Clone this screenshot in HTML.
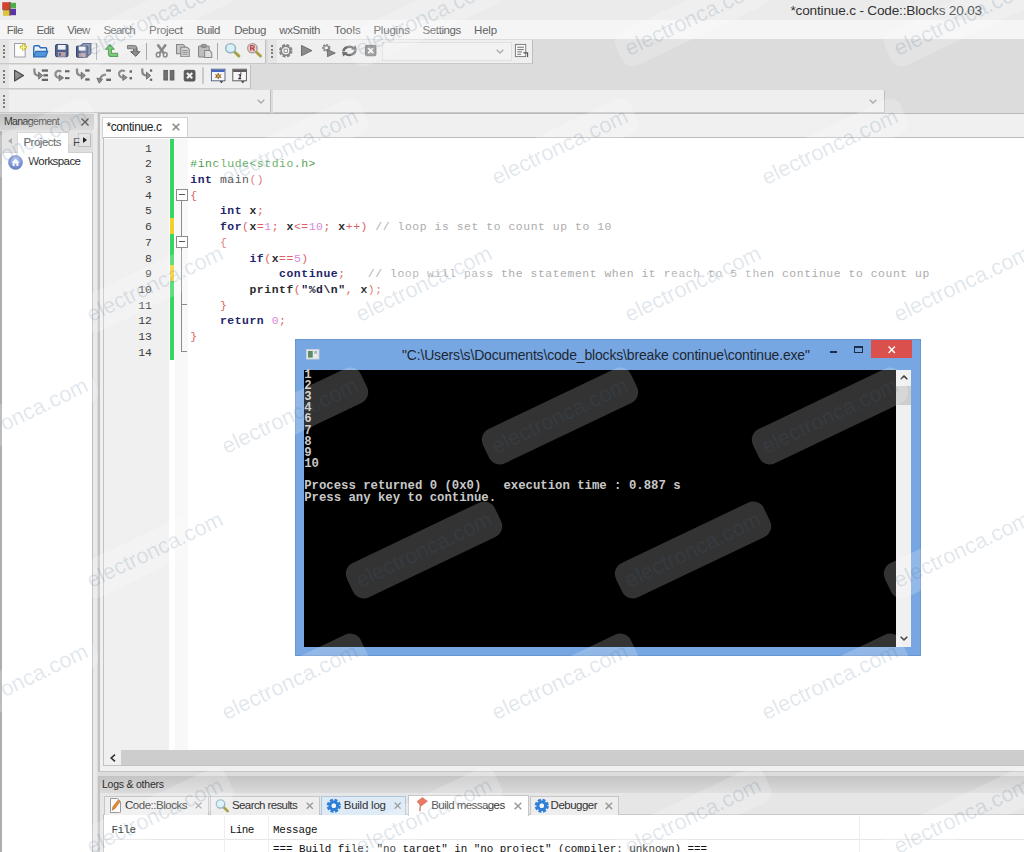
<!DOCTYPE html>
<html><head><meta charset="utf-8"><title>continue.c - Code::Blocks 20.03</title>
<style>
*{box-sizing:border-box;margin:0;padding:0}
html,body{width:1024px;height:852px;overflow:hidden;background:#dcdcdc;font-family:"Liberation Sans",sans-serif;font-size:12px;color:#222}
body{position:relative}
.abs{position:absolute}
svg{display:block;overflow:visible}
.ts,.tm{position:absolute;white-space:pre}
.ts{font-family:"Liberation Sans",sans-serif}
.tm{font-family:"Liberation Mono",monospace}
#title{left:0;top:0;width:1024px;height:20px;background:#ebebeb}
#menu{left:0;top:20px;width:1024px;height:19px;background:#f5f5f5}
.bar{position:absolute;background:#efefef;border-bottom:1px solid #c8c8c8;border-right:1px solid #bebebe}
.grip{position:absolute;left:0;top:0;width:8.5px;height:100%;background:#e5e5e5}
.grip:after{content:"";position:absolute;left:3.2px;top:4.8px;width:2.3px;height:13.2px;background:repeating-linear-gradient(to bottom,#7c7c7c 0,#7c7c7c 2px,transparent 2px,transparent 3.7px)}
.sep{position:absolute;width:1px;height:17px;background:#a8a8a8}
.ic{position:absolute}
.combo{position:absolute;background:#f2f2f2;border:1px solid #e0e0e0}
.chev{position:absolute;width:8px;height:5px}
/* management */
#mgmt{left:0;top:113px;width:97px;height:739px;background:linear-gradient(to right,#dedede 93px,#e9e9e9 93px)}
#mgmt .hd{position:absolute;left:0;top:.5px;width:93.5px;height:16.5px;background:linear-gradient(#c2c2c2,#d4d4d4)}
#mgmt .tree{position:absolute;left:0;top:39px;width:92.5px;height:700px;background:#fff;border-left:2.3px solid #adadad;border-right:1.5px solid #bdbdbd;border-top:1px solid #d0d0d0}
#mgmt .ls{position:absolute;left:0;top:18px;width:2.3px;height:22px;background:#b4b4b4}
#mgmt .tab{position:absolute;left:16.5px;top:18.5px;width:52.5px;height:21.5px;background:#fff;border:1px solid #cfcfcf;border-bottom:none}
/* editor */
#edwrap{left:97.5px;top:113px;width:927px;height:658.5px;background:#f0f0f0;border-left:2px solid #c2c2c2;border-top:1.5px solid #b8b8b8;border-bottom:1.5px solid #c4c4c4}
#edtab{left:102px;top:116.5px;width:85.5px;height:22px;background:#fff;border:1px solid #d2d2d2;border-bottom:none}
#ed{left:103px;top:137.3px;width:921px;height:628.5px;background:#fff;border-top:1.5px solid #bcbcbc;border-left:1px solid #c2c2c2;border-bottom:1px solid #c2c2c2}
#lnm{left:104px;top:138.8px;width:64.5px;height:611.2px;background:#f0f0f0}
#chg{left:169.8px;top:138.8px;width:4.1px;height:220.8px;background:#36d660}
#fold{left:174.5px;top:138.8px;width:13.5px;height:611.2px;background:#f8f8f8}
.chy{position:absolute;left:169.8px;width:4.1px;background:#f4cf2a}
#hsb{left:104px;top:750px;width:920px;height:15px;background:#f0f0f0}
#hsb i{position:absolute;left:16.8px;top:0;right:0;height:15px;background:#cdcdcd}
pre{font-family:"Liberation Mono",monospace}
#code{left:190.3px;top:141.7px;font-size:11.4px;letter-spacing:.56px;line-height:15.68px;color:#2a2a2a}
#lns{left:104px;top:141.7px;width:47.8px;text-align:right;font-size:11.4px;line-height:15.68px;color:#3c3c3c}
.k{color:#24246a;font-weight:bold}.p{color:#4a9e4a}.o{color:#dc6060}.n{color:#d888d8}.c{color:#acacac}.s{color:#22223a;font-weight:bold}.b{font-weight:bold;color:#2a2a2a}
.fb{position:absolute;left:175.6px;width:12px;height:12px;border:1px solid #8c8c8c;background:#fff}
.fb:after{content:"";position:absolute;left:2px;top:4.5px;width:6px;height:1px;background:#555}
.fl{position:absolute;background:#8c8c8c}
/* console */
#con{left:295px;top:339px;width:626px;height:317px;background:#77a7e3;border:1px solid #6a96cf}
#conblk{left:304px;top:369.6px;width:591.5px;height:277px;background:#000}
#consb{left:895.5px;top:369.6px;width:15.7px;height:277px;background:#f0f0f0}
#consb i{position:absolute;left:0;top:16px;width:15.7px;height:19px;background:#cdcdcd}
#conx{left:871px;top:340px;width:41px;height:18.4px;background:#d9504c}
#contxt{left:304.2px;top:369.8px;font-size:12.3px;line-height:11.15px;color:#c8c8c8;font-weight:bold}
/* logs */
#logs{left:97.5px;top:775.5px;width:927px;height:77px;background:#e6e6e6;border-left:2px solid #c2c2c2}
#logs .hd{position:absolute;left:0;top:.5px;right:0;height:16.5px;background:linear-gradient(#c4c4c4,#dadada)}
#loglist{left:103.2px;top:814.2px;width:921px;height:38px;background:#fff;border-left:1px solid #c2c2c2;border-top:1px solid #c8c8c8}
.ltab{position:absolute;top:796px;height:18.7px;border:1px solid #c6c6c6;border-bottom:none;background:#eeeeee}
.ltab.hov{background:#deeaf6;border-color:#b0c6dc}
.ltab.act{top:794.5px;height:21px;background:#fff}
/* watermarks */
#wms{left:0;top:0;width:1024px;height:852px;overflow:hidden;pointer-events:none}
.wm{position:absolute;width:164px;height:38px;border-radius:12px;background:rgba(255,255,255,.2);transform:rotate(-25.5deg);text-align:center;line-height:37px;font-size:21.8px;color:rgba(66,105,138,.17);white-space:nowrap}

</style></head><body>
<div id="title" class="abs"><svg class="abs" style="left:2px;top:2.3px" width="14.2" height="13.9" viewBox="0 0 14.2 13.9"><rect x=".2" y=".2" width="7.4" height="7.6" fill="#d4442c"/><rect x="8.8" y=".8" width="5.2" height="5.4" fill="#4cae44"/><rect x="1" y="8.2" width="6.4" height="5.6" fill="#dcc43c"/><rect x="8.4" y="6.8" width="5.6" height="6.4" fill="#5a34a4"/><rect x="7.2" y="0" width="1.6" height="13.6" fill="#4a2a1a" opacity=".75"/><rect x=".6" y="7.4" width="7" height="1" fill="#5a3a1a" opacity=".7"/></svg><span class="ts" style="left:790.5px;top:2.2px;font-size:13.6px;line-height:18px;letter-spacing:-0.18px;color:#333;">*continue.c - Code::Blocks 20.03</span></div>
<div id="menu" class="abs"></div><span class="ts" style="left:6.8px;top:22.5px;font-size:11.5px;line-height:15px;letter-spacing:-0.68px;color:#646464;">File</span><span class="ts" style="left:36.5px;top:22.5px;font-size:11.5px;line-height:15px;letter-spacing:-0.61px;color:#646464;">Edit</span><span class="ts" style="left:67.3px;top:22.5px;font-size:11.5px;line-height:15px;letter-spacing:-0.57px;color:#646464;">View</span><span class="ts" style="left:103.5px;top:22.5px;font-size:11.5px;line-height:15px;letter-spacing:-0.84px;color:#646464;">Search</span><span class="ts" style="left:149.1px;top:22.5px;font-size:11.5px;line-height:15px;letter-spacing:-0.34px;color:#646464;">Project</span><span class="ts" style="left:196.6px;top:22.5px;font-size:11.5px;line-height:15px;letter-spacing:-0.46px;color:#646464;">Build</span><span class="ts" style="left:234.2px;top:22.5px;font-size:11.5px;line-height:15px;letter-spacing:-0.40px;color:#646464;">Debug</span><span class="ts" style="left:279.2px;top:22.5px;font-size:11.5px;line-height:15px;letter-spacing:-0.36px;color:#646464;">wxSmith</span><span class="ts" style="left:334.0px;top:22.5px;font-size:11.5px;line-height:15px;letter-spacing:-0.04px;color:#646464;">Tools</span><span class="ts" style="left:373.4px;top:22.5px;font-size:11.5px;line-height:15px;letter-spacing:-0.20px;color:#646464;">Plugins</span><span class="ts" style="left:422.6px;top:22.5px;font-size:11.5px;line-height:15px;letter-spacing:-0.41px;color:#646464;">Settings</span><span class="ts" style="left:474.1px;top:22.5px;font-size:11.5px;line-height:15px;letter-spacing:-0.22px;color:#646464;">Help</span>
<div id="tb" class="abs" style="left:0;top:0;width:1024px;height:113px">
<div class="bar" style="left:0;top:40px;width:266px;height:24px"><div class="grip"></div></div>
<div class="bar" style="left:268px;top:40px;width:265px;height:24px"><div class="grip"></div></div>
<div class="bar" style="left:0;top:65px;width:251px;height:24px"><div class="grip"></div></div>
<div class="bar" style="left:0;top:90px;width:271px;height:23px"><div class="grip"></div></div>
<div class="bar" style="left:273px;top:90px;width:612px;height:23px"></div>
<svg class="ic" style="left:14.4px;top:43.4px;width:13.0px;height:14.5px" viewBox="2 0.7 12.2 14.3" preserveAspectRatio="none"><path d="M2.5 1.2h10v13.3h-10z" fill="#fdfdfd" stroke="#a0a0ae" stroke-width="1"/><path d="M7.4 4.8h6.8M10.8 1.4v6.8" stroke="#cfc02a" stroke-width="2.6"/><path d="M8.2 4.8h5.2M10.8 2.2v5.2" stroke="#fdf8a8" stroke-width="1"/></svg>
<svg class="ic" style="left:32.8px;top:44.8px;width:15.2px;height:12.5px" viewBox="0.8 2.3 14.7 12.100000000000001" preserveAspectRatio="none"><path d="M1.5 13.5v-9q0-1.5 1.5-1.5h3.5l1.5 2h5q1 0 1 1v2" fill="#e9f2fb" stroke="#2f6fb5" stroke-width="1.4" stroke-linejoin="round"/><path d="M1.3 13.8l2.2-5.3h11.6l-2 5.3z" fill="#4f94dc" stroke="#2f6fb5" stroke-width="1.2" stroke-linejoin="round"/></svg>
<svg class="ic" style="left:55.0px;top:44.1px;width:13.5px;height:13.2px" viewBox="1 1 14 14" preserveAspectRatio="none"><rect x="1.5" y="1.5" width="13" height="13" rx="1.5" fill="#50628c" stroke="#36456a" stroke-width="1"/><rect x="4" y="2" width="8" height="5" fill="#eef1f6"/><rect x="4" y="9.5" width="8" height="5" fill="#b9a0a8"/><rect x="5" y="10.5" width="2" height="3" fill="#50628c"/></svg>
<svg class="ic" style="left:75.6px;top:43.2px;width:15.4px;height:14.7px" viewBox="0.5 0.5 15.0 14.5" preserveAspectRatio="none"><path d="M4.5 3.5l3-2.5h7.5v10l-3 2.5" fill="#7889ab" stroke="#3c4b70" stroke-width="1"/><rect x="1" y="3.5" width="11" height="11" rx="1.2" fill="#50628c" stroke="#36456a" stroke-width="1"/><rect x="3.2" y="4" width="6.6" height="4" fill="#eef1f6"/><rect x="3.2" y="10.5" width="6.6" height="4" fill="#b9a0a8"/></svg>
<svg class="ic" style="left:105.2px;top:43.5px;width:13.2px;height:13.1px" viewBox="1.1 0.7 13.1 13.3" preserveAspectRatio="none"><path d="M6 1.2L1.6 6h2.9v4.5q0 3 3 3h6.2v-3.4H8.2q-.7 0-.7-.7V6h2.9z" fill="#5cbc5c" stroke="#2f8a36" stroke-width="1" stroke-linejoin="round"/></svg>
<svg class="ic" style="left:126.5px;top:45.4px;width:13.3px;height:11.8px" viewBox="1.8 3 13.899999999999999 12.3" preserveAspectRatio="none"><path d="M11 14.8L15.2 10h-2.9V6.5q0-3-3-3H2.3v3.4h5.5q.7 0 .7.7V10H5.6z" fill="#8c8c8c" stroke="#5a5a5a" stroke-width="1" stroke-linejoin="round"/></svg>
<svg class="ic" style="left:155.8px;top:44.2px;width:11.4px;height:13.1px" viewBox="2.5 1 11.0 13.5" preserveAspectRatio="none"><path d="M4 1.5l6.2 9.2M12 1.5L5.8 10.7" stroke="#8a8a8a" stroke-width="2.5" fill="none"/><ellipse cx="4.6" cy="12" rx="1.8" ry="2.3" fill="none" stroke="#8a8a8a" stroke-width="1.5"/><ellipse cx="11.4" cy="12" rx="1.8" ry="2.3" fill="none" stroke="#8a8a8a" stroke-width="1.5"/></svg>
<svg class="ic" style="left:176.2px;top:44.2px;width:13.8px;height:13.1px" viewBox="1.5 1 13.0 14" preserveAspectRatio="none"><path d="M2 1.5h6l2 2v8H2z" fill="#c8c8c8" stroke="#858585"/><path d="M6 4.5h6l2 2v8H6z" fill="#d4d4d4" stroke="#858585"/><path d="M7.5 8h5M7.5 10h5M7.5 12h5" stroke="#8a8a8a" stroke-width=".9"/></svg>
<svg class="ic" style="left:197.7px;top:43.7px;width:14.3px;height:14.1px" viewBox="1 0.9 14 14.1" preserveAspectRatio="none"><rect x="1.5" y="3" width="10.5" height="11" rx="1" fill="#bdbdbd" stroke="#858585"/><rect x="4.2" y="1.3" width="5" height="3" rx="1" fill="#9a9a9a" stroke="#7a7a7a" stroke-width=".8"/><path d="M7.5 7.5h5l2 2v5h-7z" fill="#dedede" stroke="#858585"/></svg>
<svg class="ic" style="left:225.0px;top:43.2px;width:15.2px;height:14.2px" viewBox="0.8 0.8 15.0 15.0" preserveAspectRatio="none"><path d="M9.5 9.5l5 5" stroke="#a9a044" stroke-width="3" stroke-linecap="round"/><circle cx="6.3" cy="6.3" r="4.8" fill="#d9eff8" stroke="#8fb4c4" stroke-width="1.5"/></svg>
<svg class="ic" style="left:246.8px;top:43.2px;width:14.7px;height:14.2px" viewBox="0.8 0.8 15.0 15.0" preserveAspectRatio="none"><path d="M9.5 9.5l5 5" stroke="#a9a044" stroke-width="3" stroke-linecap="round"/><circle cx="6.3" cy="6.3" r="4.8" fill="#e4d8d8" stroke="#b49a9a" stroke-width="1.5"/><path d="M4.6 9V3.6h2q1.6 0 1.6 1.4t-1.6 1.4h-2m1.8 0L8.4 9" fill="none" stroke="#c04a48" stroke-width="1.5"/></svg>
<svg class="ic" style="left:278.5px;top:43.7px;width:13.5px;height:13.5px" viewBox="1.7 1.7 12.600000000000001 12.600000000000001" preserveAspectRatio="none"><g fill="none" stroke="#868686"><circle cx="8" cy="8" r="5" stroke-width="2.6" stroke-dasharray="2.6 1.33"/><circle cx="8" cy="8" r="4.3" stroke-width="1.6"/></g><rect x="6.5" y="6.5" width="3" height="3" fill="#fff" stroke="#868686" stroke-width=".8"/></svg>
<svg class="ic" style="left:301.0px;top:44.7px;width:11.4px;height:11.2px" viewBox="2.5 1.3 12.0 13.399999999999999" preserveAspectRatio="none"><path d="M3 1.8L14 8L3 14.2z" fill="#8a8a8a" stroke="#666" stroke-width="1" stroke-linejoin="round"/></svg>
<svg class="ic" style="left:321.5px;top:44.2px;width:13.8px;height:13.1px" viewBox="1.4 0.9 14.299999999999999 15.0" preserveAspectRatio="none"><g fill="none" stroke="#8a8a8a"><circle cx="5.8" cy="5.3" r="3.3" stroke-width="2.2" stroke-dasharray="1.9 1.1"/><circle cx="5.8" cy="5.3" r="2.6" stroke-width="1.3"/></g><path d="M7 7.2L15.2 11.3L7 15.4z" fill="#8a8a8a" stroke="#666" stroke-width=".9" stroke-linejoin="round"/></svg>
<svg class="ic" style="left:342.0px;top:44.8px;width:14.9px;height:11.8px" viewBox="1 2.2 14 11.600000000000001" preserveAspectRatio="none"><path d="M2.4 8.6a5.6 4.8 0 0 1 9.6-3.2" fill="none" stroke="#6e6e6e" stroke-width="2.3"/><path d="M13.6 7.4a5.6 4.8 0 0 1-9.6 3.2" fill="none" stroke="#6e6e6e" stroke-width="2.3"/><path d="M9.6 6.6l5.4.4l-1.2-4.6z" fill="#6e6e6e"/><path d="M6.4 9.4L1 9l1.2 4.6z" fill="#6e6e6e"/></svg>
<svg class="ic" style="left:365.0px;top:45.4px;width:11.4px;height:11.2px" viewBox="1.3 1.3 13.399999999999999 13.399999999999999" preserveAspectRatio="none"><rect x="1.8" y="1.8" width="12.4" height="12.4" rx="1.6" fill="#8b8b8b" stroke="#6a6a6a" stroke-width="1"/><path d="M5 5l6 6M11 5l-6 6" stroke="#f4f4f4" stroke-width="2.4"/></svg>
<div class="sep" style="left:96px;top:42.5px"></div>
<div class="sep" style="left:146px;top:42.5px"></div>
<div class="sep" style="left:217px;top:42.5px"></div>
<div class="combo" style="left:382px;top:42px;width:130px;height:19px"></div>
<svg class="chev" style="left:496px;top:49px" viewBox="0 0 8 5"><path d="M.7.7L4 4L7.3.7" fill="none" stroke="#aaa" stroke-width="1.3"/></svg>
<svg class="ic" style="left:514.0px;top:43.0px;width:15px;height:15px" viewBox="0 0 16 16"><rect x="1.5" y="1.5" width="11" height="13" fill="#f8f8f8" stroke="#777" stroke-width="1"/><path d="M3.5 4.5h7M3.5 7h7M3.5 9.5h5M3.5 12h4" stroke="#666" stroke-width="1"/><path d="M10 10.5h4.5v4.5" fill="none" stroke="#555" stroke-width="1.2"/></svg>
<svg class="abs" style="left:0;top:64px" width="260" height="26" viewBox="0 0 260 26"><defs><linearGradient id="pg" x1="0" y1="0" x2="1" y2="1"><stop offset="0" stop-color="#a8a8a8"/><stop offset="1" stop-color="#6e6e6e"/></linearGradient></defs><path d="M14.6 6.3L23.5 11.6L14.6 16.9z" fill="url(#pg)" stroke="#4a4a4a" stroke-width="1.2" stroke-linejoin="round"/><path d="M34.4 4.6v2.6q0 4.2 4.6 4.4" fill="none" stroke="#8c8c8c" stroke-width="2.3"/><path d="M38.6 8.0l4.2 3.6l-4.2 3.6z" fill="#8c8c8c" stroke="#5c5c5c" stroke-width=".7" stroke-linejoin="round"/><rect x="41.8" y="5.4" width="6.2" height="2.3" fill="#666"/><rect x="43.4" y="10.2" width="4.6" height="2.3" fill="#666"/><rect x="41.8" y="14.7" width="6.2" height="2.3" fill="#666"/><path d="M61.2 7.8A3.4 3.4 0 1 0 59.0 13.6" fill="none" stroke="#8c8c8c" stroke-width="2.2"/><path d="M59.2 10.8l4.4 3l-4.4 3z" fill="#8c8c8c" stroke="#5c5c5c" stroke-width=".7" stroke-linejoin="round"/><rect x="65" y="6.2" width="4.5" height="2.1" fill="#666"/><rect x="65" y="13.1" width="4.5" height="2.1" fill="#666"/><path d="M77.0 4.6v2.6q0 4.2 4.6 4.4" fill="none" stroke="#8c8c8c" stroke-width="2.3"/><path d="M81.2 8.0l4.2 3.6l-4.2 3.6z" fill="#8c8c8c" stroke="#5c5c5c" stroke-width=".7" stroke-linejoin="round"/><rect x="85.2" y="5.4" width="4.4" height="2.2" fill="#666"/><rect x="85.2" y="14.3" width="4.4" height="2.3" fill="#666"/><path d="M106 10.6q-5 .2-6 5" fill="none" stroke="#8c8c8c" stroke-width="2.3"/><path d="M96.8 14l5.8 1.4l-3.4 3.8z" fill="#8c8c8c" stroke="#5c5c5c" stroke-width=".7" stroke-linejoin="round"/><rect x="106.2" y="5.4" width="4.8" height="2.2" fill="#666"/><rect x="106.2" y="14.6" width="4.8" height="2.4" fill="#666"/><path d="M124.8 7.5A3.4 3.4 0 1 0 122.6 13.3" fill="none" stroke="#8c8c8c" stroke-width="2.2"/><path d="M122.8 10.5l4.4 3l-4.4 3z" fill="#8c8c8c" stroke="#5c5c5c" stroke-width=".7" stroke-linejoin="round"/><rect x="129.6" y="6.3" width="2.4" height="2.4" fill="#666"/><rect x="129.6" y="13" width="2.4" height="2.4" fill="#666"/><path d="M142.3 4.6v2.6q0 4.2 4.6 4.4" fill="none" stroke="#8c8c8c" stroke-width="2.3"/><path d="M146.5 8.0l4.2 3.6l-4.2 3.6z" fill="#8c8c8c" stroke="#5c5c5c" stroke-width=".7" stroke-linejoin="round"/><rect x="149.9" y="5.4" width="2.3" height="2.3" fill="#666"/><rect x="149.9" y="14.6" width="2.3" height="2.3" fill="#666"/><rect x="163.8" y="6.3" width="3.9" height="9.8" fill="#707070" stroke="#555" stroke-width=".7"/><rect x="170.1" y="6.3" width="3.9" height="9.8" fill="#707070" stroke="#555" stroke-width=".7"/><rect x="184.2" y="6.3" width="10.8" height="10.8" rx="1.4" fill="#5e5e5e" stroke="#484848" stroke-width=".8"/><path d="M187 9.1l5.2 5.2M192.2 9.1l-5.2 5.2" stroke="#f2f2f2" stroke-width="2.1"/><rect x="202.5" y="3.4" width="1" height="16.4" fill="#a6a6a6"/><rect x="211.4" y="5.2" width="13.6" height="11.6" fill="#f4f6fb" stroke="#50597a" stroke-width=".9"/><rect x="211.8" y="5.6" width="12.8" height="2.4" fill="#4468c0"/><path d="M218.2 8.6l1 2.1l2.4-.5l-1.4 1.9l1.4 1.9l-2.4-.4l-1 2l-1-2l-2.4.4l1.4-1.9l-1.4-1.9l2.4.5z" fill="#8a5a18"/><circle cx="218.2" cy="12.1" r="1.3" fill="#d4a840"/><path d="M219.6 17.3h3.6l-1.8 1.9z" fill="#333"/><rect x="232.8" y="5.2" width="13.6" height="11.6" fill="#f6f6f6" stroke="#505050" stroke-width=".9"/><rect x="233.2" y="5.6" width="12.8" height="2.4" fill="#5c5c5c"/><path d="M240.2 9.2h1.3M238.6 10.9h2l-.9 3.6M238.2 14.7h3" stroke="#333" stroke-width="1.2" fill="none"/><path d="M241 17.3h3.6l-1.8 1.9z" fill="#333"/></svg>
<svg class="chev" style="left:257px;top:99px" viewBox="0 0 8 5"><path d="M.7.7L4 4L7.3.7" fill="none" stroke="#aaa" stroke-width="1.3"/></svg>
<svg class="chev" style="left:869px;top:99px" viewBox="0 0 8 5"><path d="M.7.7L4 4L7.3.7" fill="none" stroke="#aaa" stroke-width="1.3"/></svg>
</div>
<div id="mgmt" class="abs"><div class="hd"></div><div class="ls"></div><div class="tree"></div><div class="tab"></div><div class="abs" style="left:78px;top:20px;width:13px;height:14px;background:#e2e2e2;border:1px solid #bdbdbd"></div><svg class="abs" style="left:8px;top:25px" width="4" height="6" viewBox="0 0 4 6"><path d="M4 0L0 3L4 6z" fill="#999"/></svg><svg class="abs" style="left:83px;top:24px" width="4" height="6" viewBox="0 0 4 6"><path d="M0 0L4 3L0 6z" fill="#222"/></svg><svg class="abs" style="left:81px;top:4.5px" width="8" height="8" viewBox="0 0 8 8"><path d="M.5.5l7 7M7.5.5l-7 7" stroke="#333" stroke-width="1.3"/></svg><svg class="abs" style="left:8px;top:41.5px" width="15" height="15" viewBox="0 0 15 15"><defs><radialGradient id="wg" cx=".5" cy=".3" r=".7"><stop offset="0" stop-color="#a8bdf0"/><stop offset="1" stop-color="#3c58b8"/></radialGradient></defs><circle cx="7.5" cy="7.5" r="7" fill="url(#wg)" stroke="#5a70b8" stroke-width=".6"/><path d="M3.4 7.6L7.5 3.8l4.1 3.8h-1.2v3.4H8.4V8.6H6.6v2.4H4.6V7.6z" fill="#f2f5fc"/></svg></div><span class="ts" style="left:4.0px;top:114.3px;font-size:10.5px;line-height:14px;letter-spacing:-0.63px;color:#3a3a3a;">Management</span><span class="ts" style="left:23.4px;top:134.5px;font-size:11.5px;line-height:15px;letter-spacing:-0.49px;color:#444;">Projects</span><span class="ts" style="left:73.0px;top:134.5px;font-size:11.5px;line-height:15px;letter-spacing:-3.03px;color:#444;">F</span><span class="ts" style="left:28.3px;top:154.0px;font-size:11.5px;line-height:15px;letter-spacing:-0.58px;color:#2e2e2e;">Workspace</span>
<div id="edwrap" class="abs"></div>
<div id="edtab" class="abs"></div>
<div id="ed" class="abs"></div>
<div id="lnm" class="abs"></div>
<div id="fold" class="abs"></div>
<div id="chg" class="abs"></div>
<div class="chy" style="top:218px;height:15.7px"></div>
<div class="chy" style="top:265px;height:15.7px"></div>
<div class="fl" style="left:181px;top:200px;width:1px;height:151px"></div>
<div class="fl" style="left:181px;top:304px;width:6px;height:1px"></div>
<div class="fl" style="left:181px;top:351px;width:6px;height:1px"></div>
<div class="fb" style="top:188.6px"></div>
<div class="fb" style="top:235.8px"></div>
<div id="hsb" class="abs"><i></i><svg class="abs" style="left:5.5px;top:4px" width="6" height="8" viewBox="0 0 6 8"><path d="M5 .7L1.2 4L5 7.3" fill="none" stroke="#333" stroke-width="1.6"/></svg></div>
<pre id="lns" class="abs">1
2
3
4
5
6
7
8
9
10
11
12
13
14</pre>
<pre id="code" class="abs">

<span class="p">#include&lt;stdio.h&gt;</span>
<span class="k">int</span> main<span class="o">()</span>
<span class="o">{</span>
    <span class="k">int</span> <span class="b">x</span><span class="o">;</span>
    <span class="k">for</span><span class="o">(</span><span class="b">x</span><span class="o">=</span><span class="n">1</span><span class="o">;</span> <span class="b">x</span><span class="o">&lt;=</span><span class="n">10</span><span class="o">;</span> <span class="b">x</span><span class="o">++)</span> <span class="c">// loop is set to count up to 10</span>
    <span class="o">{</span>
        <span class="k">if</span><span class="o">(</span><span class="b">x</span><span class="o">==</span><span class="n">5</span><span class="o">)</span>
            <span class="k">continue</span><span class="o">;</span>   <span class="c">// loop will pass the statement when it reach to 5 then continue to count up</span>
        <span class="b">printf</span><span class="o">(</span><span class="s">"%d\n"</span><span class="o">,</span> <span class="b">x</span><span class="o">);</span>
    <span class="o">}</span>
    <span class="k">return</span> <span class="n">0</span><span class="o">;</span>
<span class="o">}</span>
</pre>
<span class="ts" style="left:106.4px;top:118.5px;font-size:12px;line-height:16px;letter-spacing:-0.38px;color:#222;">*continue.c</span><svg class="abs" style="left:172px;top:123px" width="8" height="8" viewBox="0 0 8 8"><path d="M.7.7l6.6 6.6M7.3.7L.7 7.3" stroke="#8a8a8a" stroke-width="1.6"/></svg>
<div id="con" class="abs"></div>
<div id="conx" class="abs"><svg class="abs" style="left:17px;top:5.5px" width="7.5" height="7.5" viewBox="0 0 8 8"><path d="M.6.6l6.8 6.8M7.4.6L.6 7.4" stroke="#fff" stroke-width="1.5"/></svg></div>
<div class="abs" style="left:830.3px;top:350.5px;width:7.2px;height:2px;background:#1d2d4d"></div>
<div class="abs" style="left:853.7px;top:345.6px;width:9.2px;height:7px;border:1px solid #1d2d4d;border-top-width:2px"></div>
<svg class="abs" style="left:306px;top:348.5px" width="13.5" height="10.5" viewBox="0 0 14 11"><rect x=".5" y=".5" width="13" height="10" fill="#e8ece8" stroke="#c8d0dc"/><rect x="2" y="2" width="5" height="7" fill="#5e8a6a"/><rect x="8.5" y="2" width="3" height="3" fill="#aab6c4"/></svg>
<div id="conblk" class="abs"></div>
<div id="consb" class="abs"><i></i><svg class="abs" style="left:4px;top:5.5px" width="8" height="5" viewBox="0 0 8 5"><path d="M.7 4.3L4 1L7.3 4.3" fill="none" stroke="#333" stroke-width="1.5"/></svg><svg class="abs" style="left:4px;top:266.5px" width="8" height="5" viewBox="0 0 8 5"><path d="M.7.7L4 4L7.3.7" fill="none" stroke="#444" stroke-width="1.5"/></svg></div>
<pre id="contxt" class="abs">1
2
3
4
6
7
8
9
10

Process returned 0 (0x0)   execution time : 0.887 s
Press any key to continue.</pre>
<span class="ts" style="left:402.0px;top:346.0px;font-size:14px;line-height:18px;letter-spacing:-0.17px;color:#1d2733;">"C:\Users\s\Documents\code_blocks\breake continue\continue.exe"</span>
<div id="logs" class="abs"><div class="hd"></div></div><div id="loglist" class="abs"></div><div class="ltab" style="left:103.9px;width:104.8px"></div><div class="ltab" style="left:209.8px;width:110.7px"></div><div class="ltab hov" style="left:321.0px;width:85.3px"></div><div class="ltab act" style="left:407.5px;width:121.2px"></div><div class="ltab" style="left:529.7px;width:89.7px"></div><span class="ts" style="left:102.0px;top:777.0px;font-size:10.5px;line-height:14px;letter-spacing:-0.23px;color:#2e2e2e;">Logs &amp; others</span><span class="ts" style="left:125.0px;top:797.8px;font-size:11.5px;line-height:15px;letter-spacing:-0.47px;color:#333;">Code::Blocks</span><span class="ts" style="left:232.0px;top:797.8px;font-size:11.5px;line-height:15px;letter-spacing:-0.60px;color:#333;">Search results</span><span class="ts" style="left:343.7px;top:797.8px;font-size:11.5px;line-height:15px;letter-spacing:-0.23px;color:#333;">Build log</span><span class="ts" style="left:431.2px;top:797.8px;font-size:11.5px;line-height:15px;letter-spacing:-0.55px;color:#333;">Build messages</span><span class="ts" style="left:550.6px;top:797.8px;font-size:11.5px;line-height:15px;letter-spacing:-0.52px;color:#333;">Debugger</span><svg class="abs" style="left:194.6px;top:802.0px" width="7.0" height="7.0" viewBox="0 0 8 8"><path d="M.7.7l6.6 6.6M7.3.7L.7 7.3" stroke="#9a9a9a" stroke-width="1.5"/></svg><svg class="abs" style="left:305.5px;top:801.8px" width="7.5" height="7.5" viewBox="0 0 8 8"><path d="M.7.7l6.6 6.6M7.3.7L.7 7.3" stroke="#9a9a9a" stroke-width="1.5"/></svg><svg class="abs" style="left:393.7px;top:801.9px" width="7.3" height="7.3" viewBox="0 0 8 8"><path d="M.7.7l6.6 6.6M7.3.7L.7 7.3" stroke="#9a9a9a" stroke-width="1.5"/></svg><svg class="abs" style="left:514.0px;top:801.5px" width="8.0" height="8.0" viewBox="0 0 8 8"><path d="M.7.7l6.6 6.6M7.3.7L.7 7.3" stroke="#9a9a9a" stroke-width="1.5"/></svg><svg class="abs" style="left:604.7px;top:801.6px" width="7.8" height="7.8" viewBox="0 0 8 8"><path d="M.7.7l6.6 6.6M7.3.7L.7 7.3" stroke="#9a9a9a" stroke-width="1.5"/></svg><svg class="abs" style="left:110px;top:798px" width="11" height="15" viewBox="0 0 11 15"><path d="M.5.5h7l3 3v11H.5z" fill="#fbfbfb" stroke="#999"/><path d="M2.2 12.2L3 8.6L8 2.2l2 1.6L5 10.4z" fill="#e08a3c" stroke="#b86820" stroke-width=".6"/></svg><svg class="abs" style="left:215px;top:798px" width="14" height="15" viewBox="0 0 16 16"><path d="M9.5 9.5l5 5" stroke="#a9a044" stroke-width="3" stroke-linecap="round"/><circle cx="6.3" cy="6.3" r="4.8" fill="#d9eff8" stroke="#8fb4c4" stroke-width="1.5"/></svg><svg class="abs" style="left:325.5px;top:797.5px" width="15.5" height="15.5" viewBox="0 0 16 16"><g fill="none" stroke="#2f7fd6"><circle cx="8" cy="8" r="5.6" stroke-width="3.4" stroke-dasharray="2.9 1.5"/><circle cx="8" cy="8" r="3.9" stroke-width="3.2"/></g><circle cx="8" cy="8" r="2.3" fill="#f4f8fd"/></svg><svg class="abs" style="left:533.5px;top:797.5px" width="15.5" height="15.5" viewBox="0 0 16 16"><g fill="none" stroke="#2f7fd6"><circle cx="8" cy="8" r="5.6" stroke-width="3.4" stroke-dasharray="2.9 1.5"/><circle cx="8" cy="8" r="3.9" stroke-width="3.2"/></g><circle cx="8" cy="8" r="2.3" fill="#f4f8fd"/></svg><svg class="abs" style="left:416px;top:797px" width="12" height="15" viewBox="0 0 12 15"><path d="M4.6 6l-.8 8.4" stroke="#c8785a" stroke-width="1.6"/><path d="M1 4.6L6.4.6l5 3.6L5.2 9z" fill="#e4583c" stroke="#c8452c" stroke-width=".6" stroke-linejoin="round"/></svg><span class="tm" style="left:111.4px;top:822.6px;font-size:10.9px;line-height:14px;letter-spacing:-0.52px;color:#111;">File</span><span class="tm" style="left:229.8px;top:822.6px;font-size:10.9px;line-height:14px;letter-spacing:-0.52px;color:#111;">Line</span><span class="tm" style="left:273.0px;top:822.6px;font-size:10.9px;line-height:14px;letter-spacing:-0.19px;color:#111;">Message</span><span class="tm" style="left:273.0px;top:842.2px;font-size:10.9px;line-height:14px;letter-spacing:-0.06px;color:#111;">=== Build file: "no target" in "no project" (compiler: unknown) ===</span><div class="abs" style="left:104px;top:838.6px;width:920px;height:1px;background:#e6e6e6"></div><div class="abs" style="left:223.5px;top:816px;width:1px;height:36px;background:#eeeeee"></div><div class="abs" style="left:268px;top:816px;width:1px;height:36px;background:#eeeeee"></div><div class="abs" style="left:859px;top:816px;width:1px;height:36px;background:#eeeeee"></div>
<div id="wms" class="abs"><div class="wm" style="left:-196px;top:-1px">electronca.com</div><div class="wm" style="left:73px;top:-1px">electronca.com</div><div class="wm" style="left:342px;top:-1px">electronca.com</div><div class="wm" style="left:611px;top:-1px">electronca.com</div><div class="wm" style="left:880px;top:-1px">electronca.com</div><div class="wm" style="left:-196px;top:265px">electronca.com</div><div class="wm" style="left:73px;top:265px">electronca.com</div><div class="wm" style="left:342px;top:265px">electronca.com</div><div class="wm" style="left:611px;top:265px">electronca.com</div><div class="wm" style="left:880px;top:265px">electronca.com</div><div class="wm" style="left:-196px;top:531px">electronca.com</div><div class="wm" style="left:73px;top:531px">electronca.com</div><div class="wm" style="left:342px;top:531px">electronca.com</div><div class="wm" style="left:611px;top:531px">electronca.com</div><div class="wm" style="left:880px;top:531px">electronca.com</div><div class="wm" style="left:-196px;top:797px">electronca.com</div><div class="wm" style="left:73px;top:797px">electronca.com</div><div class="wm" style="left:342px;top:797px">electronca.com</div><div class="wm" style="left:611px;top:797px">electronca.com</div><div class="wm" style="left:880px;top:797px">electronca.com</div><div class="wm" style="left:-62px;top:128px">electronca.com</div><div class="wm" style="left:208px;top:128px">electronca.com</div><div class="wm" style="left:478px;top:128px">electronca.com</div><div class="wm" style="left:748px;top:128px">electronca.com</div><div class="wm" style="left:1018px;top:128px">electronca.com</div><div class="wm" style="left:-62px;top:397px">electronca.com</div><div class="wm" style="left:208px;top:397px">electronca.com</div><div class="wm" style="left:478px;top:397px">electronca.com</div><div class="wm" style="left:748px;top:397px">electronca.com</div><div class="wm" style="left:1018px;top:397px">electronca.com</div><div class="wm" style="left:-62px;top:663px">electronca.com</div><div class="wm" style="left:208px;top:663px">electronca.com</div><div class="wm" style="left:478px;top:663px">electronca.com</div><div class="wm" style="left:748px;top:663px">electronca.com</div><div class="wm" style="left:1018px;top:663px">electronca.com</div></div>
</body></html>
